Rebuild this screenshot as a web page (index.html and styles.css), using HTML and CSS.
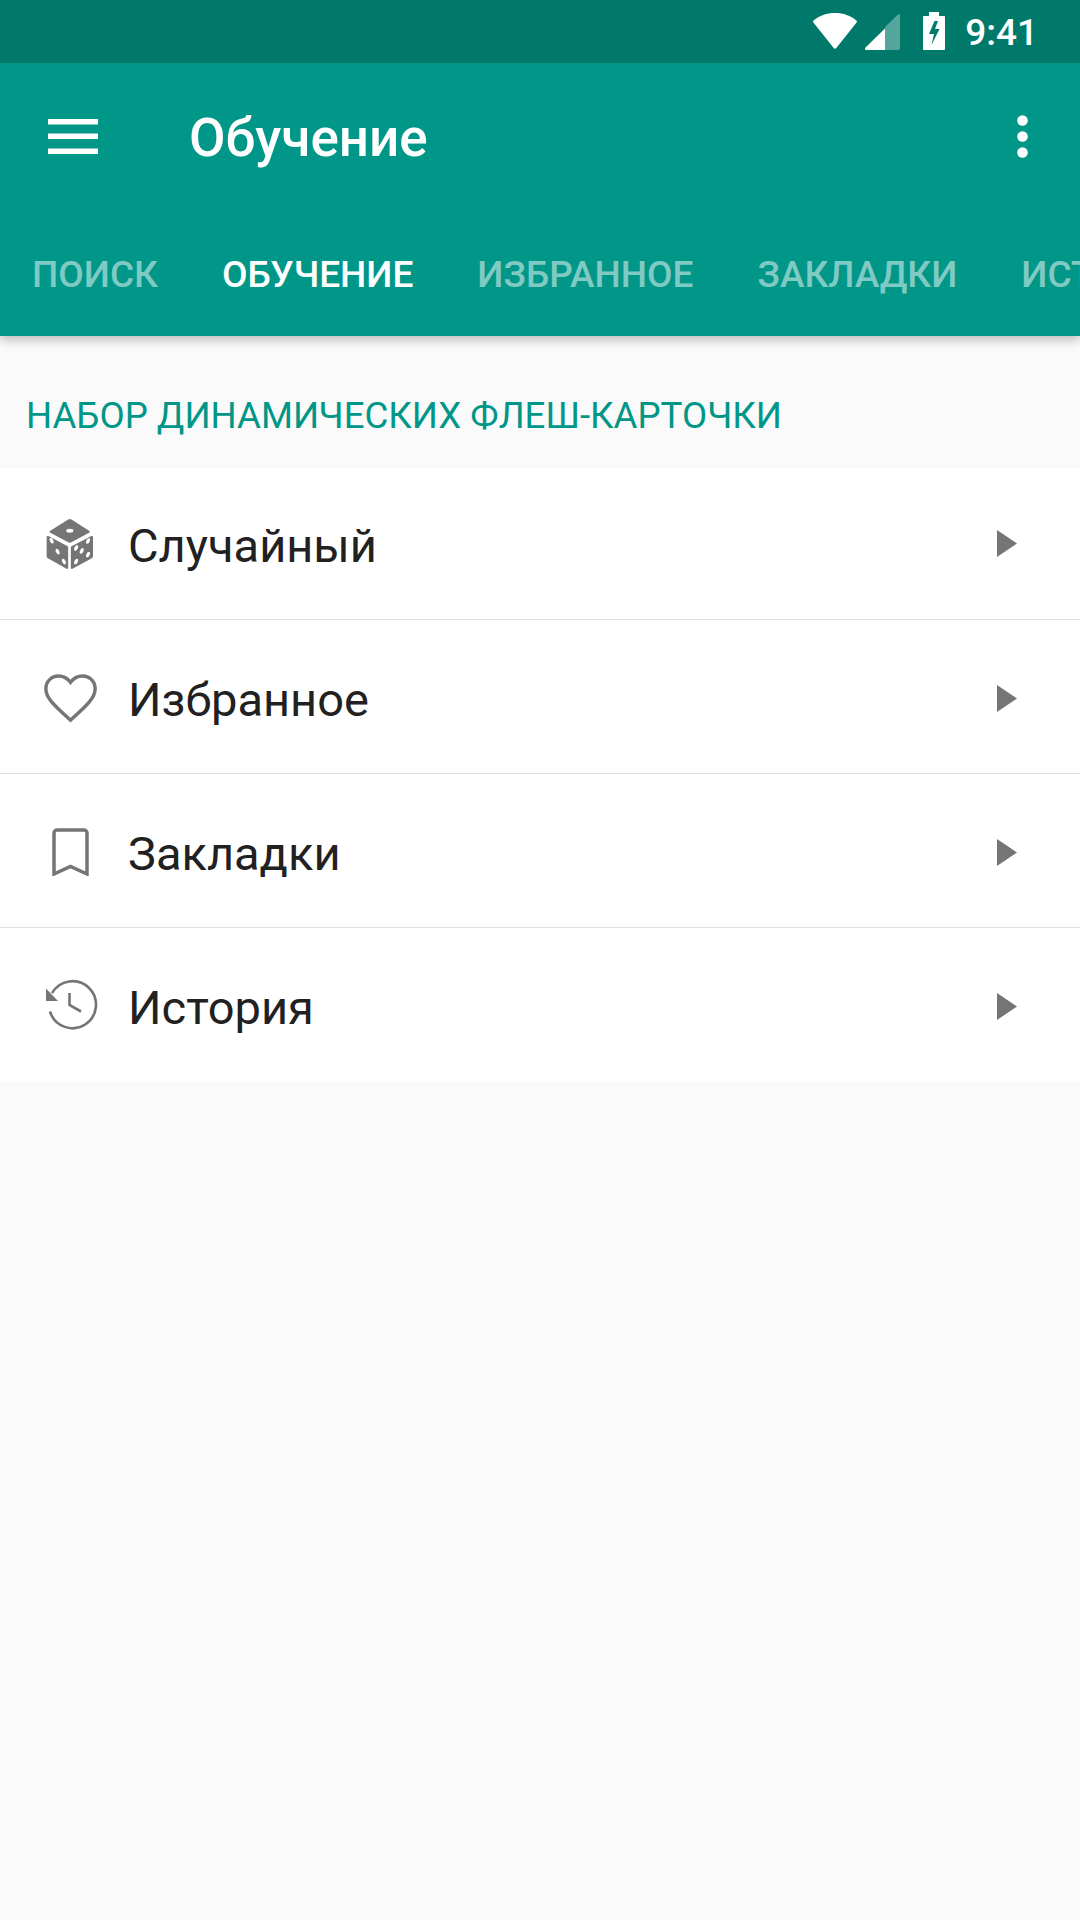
FILE: index.html
```html
<!DOCTYPE html>
<html lang="ru">
<head>
    <meta charset="UTF-8">
    <meta name="viewport" content="width=device-width, initial-scale=1.0">
    <title>Обучение</title>
    <link rel="stylesheet" href="styles.css">
</head>
<body>
    <div id="app">
        <header class="app-header">
            <div class="status-bar">
                <svg class="wifi-icon" viewBox="0 0 44 36" width="44" height="36">
                    <path d="M22 0C13.5 0 6.5 2.6 .6 7.4c-.7.6-.7 1.4-.2 2L20.7 35c.7.9 1.900.9 2.600 0L43.600 9.400c.5-.6.5-1.400-.2-2C37.500 2.600 30.500 0 22 0z" fill="#fff"/>
                </svg>
                <svg class="signal-icon" viewBox="0 0 35 36" width="35" height="36">
                    <path d="M20 13 33 .6c1-.6 2 0 2 1V34c0 1-.6 2-2 2H20z" fill="#fff" fill-opacity="0.33"/>
                    <path d="M20 14.500 .5 33.500C-.5 34.600 0 36 1.500 36H20z" fill="#fff"/>
                </svg>
                <svg class="battery-icon" viewBox="0 0 22 38" width="22" height="38">
                    <path d="M6 0h10v4h5c.6 0 1 .4 1 1v32c0 .6-.4 1-1 1H1c-.6 0-1-.4-1-1V5c0-.6.4-1 1-1h5z" fill="#fff"/>
                    <path d="M11.500 9 6 22h5l-2.500 11L16.500 17H12l3-8z" fill="#00796b"/>
                </svg>
                <span class="clock">9:41</span>
            </div>
            <div class="toolbar">
                <svg class="menu-icon" viewBox="0 0 50 35" width="50" height="35">
                    <rect width="50" height="5.500" y="0" fill="#fff"/>
                    <rect width="50" height="5.500" y="14.500" fill="#fff"/>
                    <rect width="50" height="5.500" y="29.500" fill="#fff"/>
                </svg>
                <h1 class="toolbar-title">Обучение</h1>
                <svg class="more-icon" viewBox="0 0 11 43" width="11" height="43">
                    <circle cx="5.500" cy="5.500" r="5.300" fill="#fff"/>
                    <circle cx="5.500" cy="21.500" r="5.300" fill="#fff"/>
                    <circle cx="5.500" cy="37.500" r="5.300" fill="#fff"/>
                </svg>
            </div>
            <nav class="tabs">
                <span class="tab">Поиск</span>
                <span class="tab tab-active">Обучение</span>
                <span class="tab">Избранное</span>
                <span class="tab">Закладки</span>
                <span class="tab">История</span>
            </nav>
        </header>

        <div class="section-title">НАБОР ДИНАМИЧЕСКИХ ФЛЕШ-КАРТОЧКИ</div>

        <ul class="menu-list">
            <li class="menu-row">
                <span class="row-icon">
                    <svg viewBox="80 82 145 156" width="48" height="52">
                        <path d="M147 86c3-2 7-2 10 0l53 34c3 2 3 4 0 6l-53 29c-3 2-7 2-10 0L93 126c-3-2-3-4 0-6z" fill="#757575"/>
                        <path d="M82 139c0-3 2-4 5-3l56 29c3 1 4 3 4 6v61c0 3-2 4-5 3L87 204c-3-2-5-4-5-7z" fill="#757575"/>
                        <path d="M222 139c0-3-2-4-5-3l-57 29c-3 1-5 3-5 6v61c0 3 2 4 5 3l57-31c3-2 5-4 5-7z" fill="#757575"/>
                        <ellipse cx="152" cy="120" rx="11" ry="6" fill="#fff"/>
                        <ellipse cx="97" cy="150" rx="5" ry="9" transform="rotate(-25 97 150)" fill="#fff"/>
                        <ellipse cx="115" cy="183" rx="5" ry="9" transform="rotate(-25 115 183)" fill="#fff"/>
                        <ellipse cx="134" cy="213" rx="5" ry="9" transform="rotate(-25 134 213)" fill="#fff"/>
                        <ellipse cx="207" cy="151" rx="5" ry="9" transform="rotate(25 207 151)" fill="#fff"/>
                        <ellipse cx="171" cy="172" rx="5" ry="9" transform="rotate(25 171 172)" fill="#fff"/>
                        <ellipse cx="188" cy="181" rx="5" ry="9" transform="rotate(25 188 181)" fill="#fff"/>
                        <ellipse cx="207" cy="192" rx="5" ry="9" transform="rotate(25 207 192)" fill="#fff"/>
                        <ellipse cx="171" cy="213" rx="5" ry="9" transform="rotate(25 171 213)" fill="#fff"/>
                    </svg>
                </span>
                <span class="row-label">Случайный</span>
                <svg class="row-arrow" viewBox="0 0 20 27" width="20" height="27"><path d="M0 0 20 13.500 0 27z" fill="#757575"/></svg>
            </li>
            <li class="menu-row">
                <span class="row-icon">
                    <svg viewBox="2 3 20 18.400" width="53" height="49">
                        <path d="M12 20.400 10.900 19.400C5.800 14.800 2.700 11.900 2.700 8.500 2.700 5.800 4.800 3.700 7.500 3.700 9.100 3.700 10.900 4.600 12 6.100 13.100 4.600 14.900 3.700 16.500 3.700 19.200 3.700 21.300 5.800 21.300 8.500 21.300 11.900 18.200 14.800 13.100 19.400z" fill="none" stroke="#757575" stroke-width="1.300"/>
                    </svg>
                </span>
                <span class="row-label">Избранное</span>
                <svg class="row-arrow" viewBox="0 0 20 27" width="20" height="27"><path d="M0 0 20 13.500 0 27z" fill="#757575"/></svg>
            </li>
            <li class="menu-row">
                <span class="row-icon">
                    <svg viewBox="0 0 37 48" width="37" height="48">
                        <path d="M2 46V5c0-1.700 1.300-3 3-3h27c1.700 0 3 1.300 3 3v41L18.500 38.500z" fill="none" stroke="#757575" stroke-width="3.500"/>
                    </svg>
                </span>
                <span class="row-label">Закладки</span>
                <svg class="row-arrow" viewBox="0 0 20 27" width="20" height="27"><path d="M0 0 20 13.500 0 27z" fill="#757575"/></svg>
            </li>
            <li class="menu-row">
                <span class="row-icon">
                    <svg viewBox="0 0 70 70" width="70" height="70">
                        <path d="M17 22.200A23.500 23.500 0 1 1 15 40.500" fill="none" stroke="#757575" stroke-width="2.600"/>
                        <path d="M11 17.500 23 30H11z" fill="#757575"/>
                        <path d="M34.500 22V34L46 40.500" fill="none" stroke="#757575" stroke-width="2.600"/>
                    </svg>
                </span>
                <span class="row-label">История</span>
                <svg class="row-arrow" viewBox="0 0 20 27" width="20" height="27"><path d="M0 0 20 13.500 0 27z" fill="#757575"/></svg>
            </li>
        </ul>
    </div>
</body>
</html>
```

FILE: styles.css
```css
body {
    font-family: Roboto, sans-serif;
    margin: 0;
    padding: 0;
    background-color: #fafafa;
}

#app {
    width: 1080px;
    height: 1920px;
    overflow: hidden;
    background-color: #fafafa;
}

.app-header {
    position: relative;
    background-color: #009688;
    box-shadow: 0 4px 10px rgba(0, 0, 0, 0.25);
}

.status-bar {
    height: 63px;
    box-sizing: border-box;
    background-color: #00796b;
    display: flex;
    justify-content: flex-end;
    align-items: flex-start;
    color: #fff;
    padding-right: 42px;
}

.wifi-icon {
    margin-top: 13px;
}

.signal-icon {
    margin-top: 14px;
    margin-left: 8px;
}

.battery-icon {
    margin-top: 12px;
    margin-left: 23px;
}

.clock {
    font-size: 37px;
    font-weight: 500;
    line-height: 43px;
    margin-top: 11px;
    margin-left: 20px;
}

.toolbar {
    height: 147px;
    display: flex;
    align-items: center;
    padding: 0 52px 0 48px;
    box-sizing: border-box;
}

.toolbar-title {
    flex: 1;
    margin: 3px 0 0 91px;
    color: #fff;
    font-size: 53px;
    font-weight: 500;
}

.tabs {
    height: 126px;
    box-sizing: border-box;
    padding-top: 38px;
    display: flex;
    align-items: flex-start;
    overflow: hidden;
    white-space: nowrap;
}

.tab {
    padding: 0 32px;
    font-size: 37px;
    font-weight: 500;
    line-height: 54px;
    text-transform: uppercase;
    color: rgba(255, 255, 255, 0.5);
}

.tab-active {
    color: #fff;
}

.section-title {
    height: 132px;
    box-sizing: border-box;
    padding: 53px 26px 0;
    color: #009688;
    font-size: 36.65px;
    line-height: 54px;
}

.menu-list {
    list-style: none;
    margin: 0;
    padding: 0;
    background-color: #fff;
}

.menu-row {
    height: 154px;
    box-sizing: border-box;
    padding-top: 3px;
    display: flex;
    align-items: center;
    border-bottom: 1px solid #e0e0e0;
}

.menu-row:first-child {
    height: 152px;
    padding-top: 0;
}

.menu-row:last-child {
    height: 153px;
    border-bottom: none;
}

.row-icon {
    width: 70px;
    margin-left: 35px;
    margin-right: 23px;
    display: flex;
    justify-content: center;
}

.row-label {
    flex: 1;
    padding-top: 2px;
    font-size: 47px;
    color: #212121;
}

.menu-row:first-child .row-label {
    padding-top: 3px;
}

.row-arrow {
    margin-right: 63px;
}
```
